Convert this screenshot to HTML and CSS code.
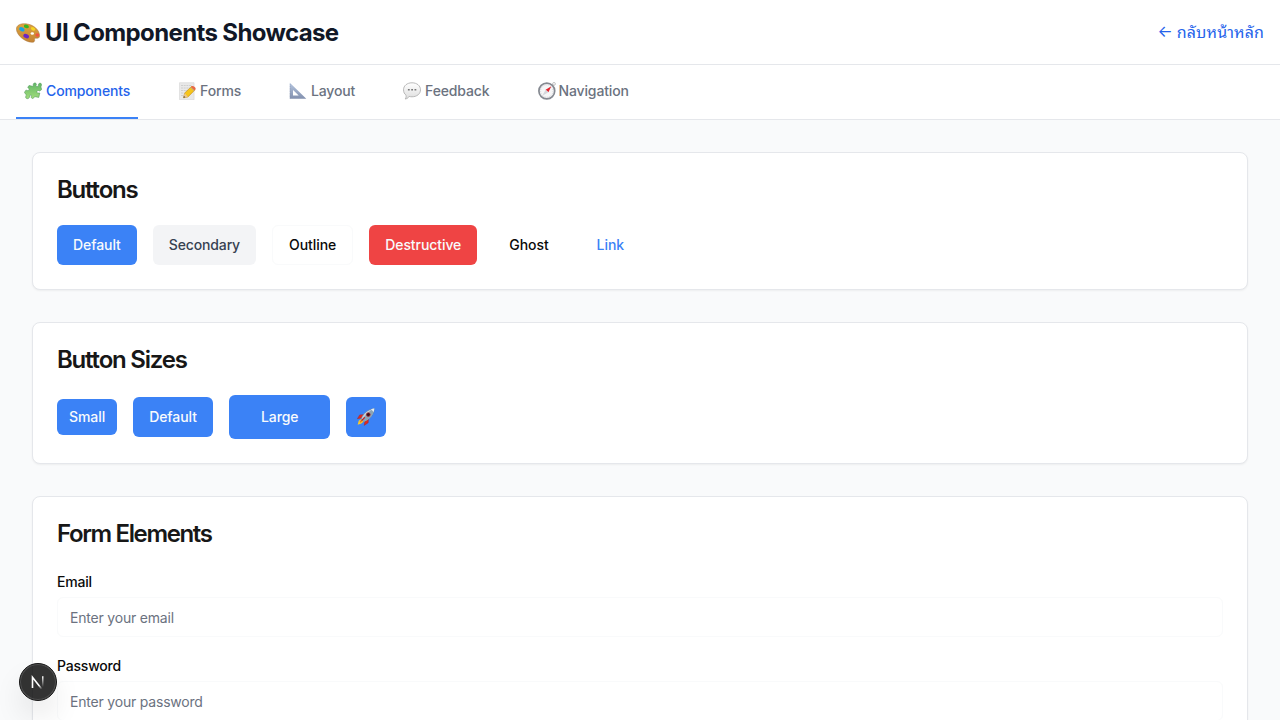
FILE: index.html
```html
<!DOCTYPE html>
<html lang="th">
<head>
<meta charset="utf-8">
<title>UI Components Showcase</title>
<link rel="stylesheet" href="styles.css">
</head>
<body>
<header class="header">
  <h1 class="brand">
    <svg class="brand-icon" viewBox="0 0 24 20"><defs><linearGradient id="wood" x2="0" y2="1"><stop stop-color="#dca43f"/><stop offset="1" stop-color="#c38334"/></linearGradient></defs><path d="M.4 6C.4 2 5 .2 10 .8c7.500.8 13.400 6 13.600 11.800.1 2.500-1.600 2.900-3.400 2.600-1.500-.2-2 .3-1.600 1.500.4 1.600-.8 2.700-2.600 2.600C8.500 19 .4 12 .4 6z" fill="url(#wood)" stroke="#a8753c" stroke-width=".5"/><ellipse cx="16.300" cy="10.500" rx="1.700" ry="1.300" fill="#fff"/><ellipse cx="6" cy="6.300" rx="2.900" ry="2" transform="rotate(28 6 6)" fill="#16a6e2"/><ellipse cx="10.500" cy="3.300" rx="2.600" ry="1.700" transform="rotate(18 10 3)" fill="#36b51f"/><ellipse cx="17" cy="5.900" rx="2.400" ry="1.600" transform="rotate(28 17 6)" fill="#f5d521"/><ellipse cx="21.300" cy="12" rx="2" ry="1.700" fill="#f0543f"/><ellipse cx="10.200" cy="13" rx="3" ry="2" transform="rotate(28 10 13)" fill="#6a25c4"/></svg>
    <span>UI Components Showcase</span>
  </h1>
  <a class="back"><span>←</span><span class="thai">กลับหน้าหลัก</span></a>
</header>
<nav class="tabs">
  <a class="tab active"><svg class="tab-icon" viewBox="0 0 18 18"><defs><linearGradient id="leaf" x2="0" y2="1"><stop stop-color="#61b765"/><stop offset="1" stop-color="#a2dc7c"/></linearGradient></defs><path d="M5 3.500 8.700 4.300C9.700 4.300 9 3 9.300 2c.6-1.700 3.200-1.300 3.100.5-.1.900-.8 1.300-.4 1.900l2 .2c.6-.2.200-1 .3-1.800.2-2 3-2.200 3.300-.4.200 1.200-.8 1.600-.7 2.500l.8 2.600-2 1.500c-.9-.3-1.500-.9-2.300-.3-1 .8-.5 2.400.7 2.400.8 0 1.100-.4 1.700-.1l-1 4.400-3.700-.7c-1.200-.1-1.100 1.200-1.800 1.600-1.300.7-2.600-.7-2-2 .3-.7.4-1.100-.2-1.200l-1.300.2-.5 2.200c-.5 1.700-3.700 1.500-3.700-.4 0-1 .9-1.500.7-2.200L.4 10.400l1.500-2.200c.9-.2 1.500.7 2.500.3 1-.5 1-1.900.2-2.300-.5-.3-.8-.3-.8-.9z" fill="url(#leaf)" stroke="#579b61" stroke-width=".6"/></svg><span>Components</span></a>
  <a class="tab"><svg class="tab-icon" viewBox="0 0 18 18"><path d="M1.500.7h14.600v17H1.500z" fill="#e9e9e9" stroke="#d0d0d0" stroke-width=".5"/><path d="M3 3.500h11M3 6h11M3 8.500h8M3 11h5M3 13.500h4" stroke="#c8c8c8" stroke-width=".8" stroke-dasharray="2 .7"/><path d="M5.500 15.800 6.700 11 13.500 4.500l3.600 3.200L10 14.900z" fill="#f6c51b" stroke="#bf861a" stroke-width=".6"/><path d="m5.500 15.800 1.200-4.800 3.300 3.900z" fill="#ebc58c"/><path d="m5.500 15.800.5-1.700 1.200 1.200z" fill="#333"/><path d="m12.900 5.100 1-1c1.400-.8 4.300 1.500 3.700 3l-1.100 1.300z" fill="#e86848"/><path d="m12.500 5.500 3.600 3.200" stroke="#aaa" stroke-width=".8"/></svg><span>Forms</span></a>
  <a class="tab"><svg class="tab-icon" viewBox="0 0 18 18"><defs><linearGradient id="steel" x2="0" y2="1"><stop stop-color="#b5c5df"/><stop offset="1" stop-color="#8290ae"/></linearGradient></defs><path fill-rule="evenodd" d="M.8.800 17.300 16.800H.8zM4 8v5.600h5.700z" fill="url(#steel)"/><path d="M1.200 2.500v13.800" stroke="#7f8da9" stroke-width=".6" stroke-dasharray=".7 1"/></svg><span>Layout</span></a>
  <a class="tab"><svg class="tab-icon" viewBox="0 0 18 18"><defs><linearGradient id="cloud" x2="0" y2="1"><stop stop-color="#fff"/><stop offset="1" stop-color="#ddd"/></linearGradient></defs><path d="M9 .8c5 0 8.500 3 8.500 7s-3.500 7-8.500 7c-1 0-2-.1-2.900-.4-.8 1.500-2.200 2.400-4 2.600.8-.9 1.200-2.200 1-3.700C1.400 12 .5 10 .5 7.800c0-4 3.500-7 8.500-7z" fill="url(#cloud)" stroke="#aaa" stroke-width=".8"/><path d="M4.900 7.100h1.800v1.500H4.900zM8.200 7.100H10v1.500H8.200zM11.500 7.100h1.800v1.500h-1.800z" fill="#777"/></svg><span>Feedback</span></a>
  <a class="tab tab-nav"><svg class="tab-icon" viewBox="0 0 18 18"><circle cx="16" cy="1.900" r="1.400" fill="none" stroke="#aaa" stroke-width=".7"/><circle cx="8.800" cy="9" r="7.900" fill="#f6f6f7" stroke="#858991" stroke-width="1.700"/><circle cx="8.800" cy="9" r="6.200" fill="none" stroke="#c9cbd0" stroke-width=".8" stroke-dasharray="1 1"/><path d="m13.400 4.300-3 6-2.800-2.600z" fill="#e5242f"/><path d="m4.300 13.700 3.300-6 2.800 2.600z" fill="#d5d7dc"/></svg><span>Navigation</span></a>
</nav>
<main class="main">
  <section class="card">
    <h2 class="card-title">Buttons</h2>
    <div class="row">
      <button class="btn primary">Default</button>
      <button class="btn secondary">Secondary</button>
      <button class="btn outline">Outline</button>
      <button class="btn destructive">Destructive</button>
      <button class="btn ghost">Ghost</button>
      <button class="btn link">Link</button>
    </div>
  </section>
  <section class="card">
    <h2 class="card-title">Button Sizes</h2>
    <div class="row">
      <button class="btn primary small">Small</button>
      <button class="btn primary">Default</button>
      <button class="btn primary large">Large</button>
      <button class="btn primary icon"><svg class="rocket" viewBox="0 0 18 18"><path d="m7.200 6.600-4.500.3L.4 10.700l4.300-.8zM11.500 10.700l-.3 4.100-4 2.600.8-5z" fill="#e02a20" stroke="#9f2027" stroke-width=".4"/><path d="m4.200 11-2.500 1.800-1 4 3.700-1.200 2.300-2.200z" fill="#f7c92d"/><path d="m4.300 12-1.600 1.800.4.900 2.500-1.600z" fill="#ef6b22"/><path d="M4.300 10.500C6.500 5.500 10.500 1.400 17.300.6c-.5 6.200-4.500 10.600-10 13z" fill="#c3d5df" stroke="#637b8d" stroke-width=".5"/><path d="M5.500 11.500C8 7 12 3 17.300.6c-.5 6.200-4.500 10.600-10 13z" fill="#8ba4b5"/><path d="M14 1.300c1-.4 2-.6 3.300-.7 0 1.200-.3 2.300-.6 3.300z" fill="#e4edf2"/><circle cx="11.300" cy="6.600" r="1.900" fill="#35151f" stroke="#b52b32" stroke-width=".7"/><path d="m4.600 12.600 3.200-3.400" stroke="#bc242a" stroke-width="1.300"/></svg></button>
    </div>
  </section>
  <section class="card">
    <h2 class="card-title title-form">Form Elements</h2>
    <div class="fields">
      <div><label class="label">Email</label><input class="input" placeholder="Enter your email"></div>
      <div><label class="label">Password</label><input class="input" placeholder="Enter your password"></div>
    </div>
  </section>
</main>
<div class="badge"><svg viewBox="0 0 38 38"><defs><linearGradient id="diag" x1="15" y1="15" x2="23" y2="26" gradientUnits="userSpaceOnUse"><stop offset=".65" stop-color="#fff"/><stop offset="1" stop-color="#fff" stop-opacity="0"/></linearGradient><linearGradient id="stem" x2="0" y1="13" y2="24" gradientUnits="userSpaceOnUse"><stop stop-color="#fff"/><stop offset="1" stop-color="#fff" stop-opacity="0"/></linearGradient></defs><path d="M13.500 25V14.200L23.500 27" fill="none" stroke="url(#diag)" stroke-width="1.600"/><path d="M23 13.200h1.500V24H23z" fill="url(#stem)"/></svg></div>
</body>
</html>
```
FILE: styles.css
```css
* { box-sizing: border-box; }
body { margin: 0; height: 720px; overflow: hidden; background: #f9fafb; color: #171717; font-family: Inter, "Noto Sans", sans-serif; font-size: 16px; line-height: 24px; }
h1, h2 { margin: 0; }
.header { height: 65px; padding: 2px 16px 0; display: flex; align-items: center; justify-content: space-between; background: #fff; border-bottom: 1px solid #e5e7eb; }
.brand { display: flex; align-items: center; gap: 5px; font-size: 24px; line-height: 32px; font-weight: 700; letter-spacing: -.63px; color: #111827; white-space: nowrap; }
.brand-icon { width: 24px; height: 20px; }
.back { display: flex; gap: 4px; margin-bottom: 4px; color: #2563eb; white-space: nowrap; }
.thai { font-family: "Noto Sans Thai Looped", "Noto Looped Thai", Loma, Garuda, Waree, Norasi, Kinnari, "Noto Serif Thai", "DejaVu Serif", serif; letter-spacing: .1px; }
.tabs { height: 55px; padding: 0 16px; display: flex; gap: 32px; background: #fff; border-bottom: 1px solid #e5e7eb; }
.tab { height: 54px; padding: 0 8px; display: flex; align-items: center; gap: 4px; border-bottom: 2px solid transparent; font-size: 14px; font-weight: 500; letter-spacing: -.13px; color: #6b7280; white-space: nowrap; }
.tab.active { color: #2563eb; border-color: #3b82f6; }
.tab:not(.active) { gap: 3.8px; }
.tab.tab-nav { gap: 3px; }
.tab-icon { width: 18px; height: 18px; margin-top: -1px; }
.main { padding: 32px; display: flex; flex-direction: column; gap: 32px; }
.card { padding: 24px; background: #fff; border: 1px solid #e5e7eb; border-radius: 8px; box-shadow: 0 1px 2px rgba(0,0,0,.05); }
.card-title { height: 24px; margin-bottom: 24px; font-size: 24px; line-height: 26px; font-weight: 600; letter-spacing: -1.21px; }
.title-form { letter-spacing: -1.37px; }
.row { display: flex; align-items: center; gap: 16px; }
.btn { height: 40px; padding: 0 16px; border: 0; border-radius: 6px; background: transparent; font: 500 14px/20px Inter, sans-serif; letter-spacing: -.07px; color: #0a0a0a; white-space: nowrap; }
.btn.primary { background: #3b82f6; color: #f8fafc; }
.btn.secondary { letter-spacing: -.14px; background: #f3f4f6; color: #374151; }
.btn.outline { padding: 0 16px; border: 1px solid #f9fafb; background: #fff; }
.btn.destructive { background: #ef4444; color: #f8fafc; }
.btn.link { color: #3b82f6; }
.btn.small { height: 36px; padding: 0 12px; }
.btn.large { height: 44px; padding: 0 32px; }
.btn.icon { width: 40px; padding: 0; display: flex; align-items: center; justify-content: center; }
.rocket { width: 18px; height: 18px; }
.fields { display: flex; flex-direction: column; gap: 16px; }
.label { display: block; height: 28px; font-size: 14px; line-height: 26px; font-weight: 500; letter-spacing: -.2px; color: #0a0a0a; }
.input { display: block; width: 100%; height: 40px; padding: 0 12px; border: 1px solid #f9fafb; border-radius: 6px; background: #fff; font: 400 14px/20px Inter, sans-serif; letter-spacing: -.2px; outline: 0; }
.input::placeholder { color: #6b7280; opacity: 1; }
.badge { position: fixed; left: 19px; top: 663px; width: 38px; height: 38px; border-radius: 50%; background: rgba(0,0,0,.8); border: 1px solid #171717; box-shadow: inset 0 0 0 1px rgba(255,255,255,.14), 0 16px 32px -8px rgba(0,0,0,.24); }
.badge svg { display: block; width: 38px; height: 38px; margin: -1px; }
```
